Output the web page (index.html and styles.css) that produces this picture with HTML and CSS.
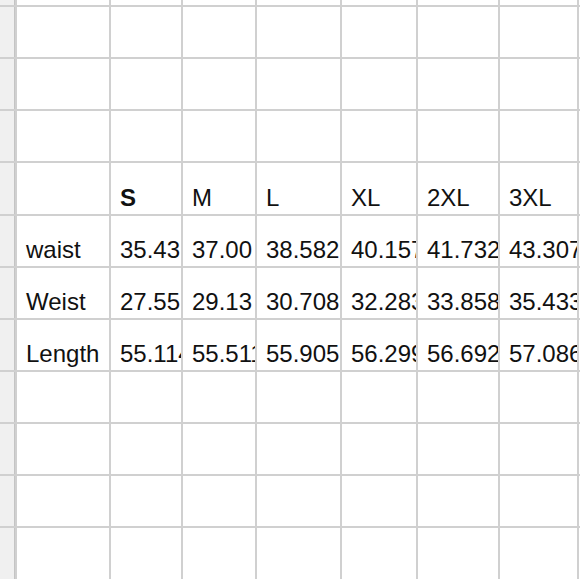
FILE: index.html
```html
<!DOCTYPE html>
<html>
<head>
<meta charset="utf-8">
<link rel="stylesheet" href="styles.css">
</head>
<body>
<div class="sheet">
  <div class="rh top"></div><div class="c top"></div><div class="c top"></div><div class="c top"></div><div class="c top"></div><div class="c top"></div><div class="c top"></div><div class="c top"></div><div class="c top"></div>
  <div class="rh"></div><div class="c"></div><div class="c"></div><div class="c"></div><div class="c"></div><div class="c"></div><div class="c"></div><div class="c"></div><div class="c"></div>
  <div class="rh"></div><div class="c"></div><div class="c"></div><div class="c"></div><div class="c"></div><div class="c"></div><div class="c"></div><div class="c"></div><div class="c"></div>
  <div class="rh"></div><div class="c"></div><div class="c"></div><div class="c"></div><div class="c"></div><div class="c"></div><div class="c"></div><div class="c"></div><div class="c"></div>
  <div class="rh"></div><div class="c"></div><div class="c bold">S</div><div class="c">M</div><div class="c">L</div><div class="c">XL</div><div class="c">2XL</div><div class="c">3XL</div><div class="c"></div>
  <div class="rh"></div><div class="c">waist</div><div class="c">35.43</div><div class="c">37.00</div><div class="c">38.582</div><div class="c">40.157</div><div class="c">41.732</div><div class="c">43.307</div><div class="c"></div>
  <div class="rh"></div><div class="c">Weist</div><div class="c">27.55</div><div class="c">29.13</div><div class="c">30.708</div><div class="c">32.283</div><div class="c">33.858</div><div class="c">35.433</div><div class="c"></div>
  <div class="rh"></div><div class="c">Length</div><div class="c">55.114</div><div class="c">55.511</div><div class="c">55.905</div><div class="c">56.299</div><div class="c">56.692</div><div class="c">57.086</div><div class="c"></div>
  <div class="rh"></div><div class="c"></div><div class="c"></div><div class="c"></div><div class="c"></div><div class="c"></div><div class="c"></div><div class="c"></div><div class="c"></div>
  <div class="rh"></div><div class="c"></div><div class="c"></div><div class="c"></div><div class="c"></div><div class="c"></div><div class="c"></div><div class="c"></div><div class="c"></div>
  <div class="rh"></div><div class="c"></div><div class="c"></div><div class="c"></div><div class="c"></div><div class="c"></div><div class="c"></div><div class="c"></div><div class="c"></div>
  <div class="rh"></div><div class="c"></div><div class="c"></div><div class="c"></div><div class="c"></div><div class="c"></div><div class="c"></div><div class="c"></div><div class="c"></div>
</div>
</body>
</html>
```

FILE: styles.css
```css
html, body {
  margin: 0;
  padding: 0;
  width: 580px;
  height: 580px;
  overflow: hidden;
  background: #ffffff;
}

.sheet {
  display: grid;
  grid-template-columns: 15px 92px 70px 72px 83px 74px 80px 77px 20px;
  grid-template-rows: 5px repeat(11, 50.15px);
  gap: 2px;
  background: #d0d0d0;
  width: 600px;
  font-family: "Liberation Sans", Arial, sans-serif;
  font-size: 24px;
  line-height: 1;
  color: #111111;
}

.rh {
  background: #f0f0f0;
  box-shadow: inset -1px 0 0 #c4c4c4;
}

.c {
  background: #ffffff;
  display: flex;
  align-items: flex-end;
  padding: 0 0 4px 9px;
  overflow: hidden;
  white-space: nowrap;
}

.c.top {
  padding: 0;
}

.bold {
  font-weight: bold;
}
```
